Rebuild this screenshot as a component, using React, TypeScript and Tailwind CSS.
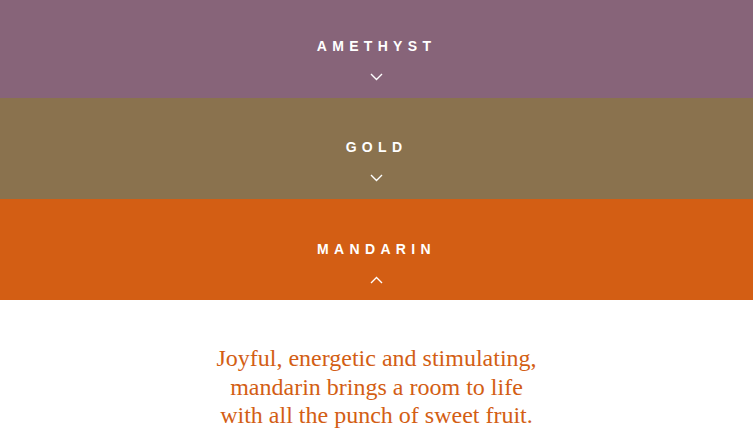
import React, { useState } from 'react'

const colours = [
  { name: 'AMETHYST', bg: 'bg-[#876479]', box: 'h-[98px] pt-[39px]' },
  { name: 'GOLD', bg: 'bg-[#8a724e]', box: 'h-[101px] pt-[42px]' },
  { name: 'MANDARIN', bg: 'bg-[#d35e14]', box: 'h-[101px] pt-[43px]' },
]

const Chevron = ({ up }: { up: boolean }) => (
  <svg width="13" height="8" viewBox="0 0 13 8" className="block">
    <polyline
      points={up ? '1,7 6.5,1.5 12,7' : '1,1 6.5,6.5 12,1'}
      fill="none"
      stroke="#ffffff"
      strokeWidth="1.4"
    />
  </svg>
)

const App = () => {
  const [open, setOpen] = useState<string>('MANDARIN')

  return (
    <div className="w-[753px] h-[440px] bg-white overflow-hidden">
      {colours.map((c) => (
        <button
          key={c.name}
          onClick={() => setOpen(c.name)}
          className={`w-full ${c.box} ${c.bg} flex flex-col items-center justify-start`}
        >
          <span
            className="text-white text-[14px] font-bold tracking-[0.38em] leading-none"
            style={{ fontFamily: '"Liberation Sans", Arial, sans-serif' }}
          >
            {c.name}
          </span>
          <span className="mt-[20px]">
            <Chevron up={open === c.name} />
          </span>
        </button>
      ))}
      <p
        className="mt-[44px] text-center text-[#d35e14] text-[24px] leading-[28.5px]"
        style={{ fontFamily: '"Liberation Serif", "Times New Roman", serif' }}
      >
        Joyful, energetic and stimulating,
        <br />
        mandarin brings a room to life
        <br />
        with all the punch of sweet fruit.
      </p>
    </div>
  )
}

export default App
